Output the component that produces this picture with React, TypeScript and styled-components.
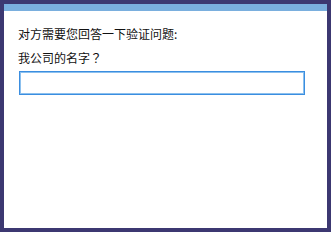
import React from "react";
import styled, { createGlobalStyle } from "styled-components";

const Global = createGlobalStyle`
    html, body {
        margin: 0;
        padding: 0;
        background: #ffffff;
    }
`;

const Frame = styled.div`
    box-sizing: border-box;
    width: 331px;
    height: 232px;
    border: 4px solid #3c3871;
    background: #ffffff;
    display: flex;
    flex-direction: column;
    font-family: "Noto Sans CJK SC", "Noto Sans", sans-serif;
    font-size: 12px;
    color: #111111;
`;

const TitleBar = styled.div`
    height: 7px;
    background: #7aafde;
    flex-shrink: 0;
`;

const Body = styled.div`
    padding: 14px 21px 0 14px;
    display: flex;
    flex-direction: column;
`;

const Line = styled.div<{ $gap?: number }>`
    line-height: 18px;
    margin-bottom: ${(p) => p.$gap ?? 0}px;
`;

// centred full-width punctuation, as in the reference
const Punct = styled.span`
    font-family: "Noto Sans CJK TC", "Noto Sans CJK SC", sans-serif;
`;

const Answer = styled.input`
    box-sizing: border-box;
    margin-left: 1px;
    width: 286px;
    height: 24px;
    border: 1px solid #3b8ee0;
    box-shadow: inset 0 0 0 1px #8cc0ee;
    outline: none;
    padding: 0 4px;
    font-family: inherit;
    font-size: 12px;
`;

export default function App() {
    return (
        <>
            <Global />
            <Frame>
                <TitleBar />
                <Body>
                    <Line $gap={6}>对方需要您回答一下验证问题:</Line>
                    <Line $gap={4}>
                        我公司的名字<Punct>？</Punct>
                    </Line>
                    <Answer type="text" />
                </Body>
            </Frame>
        </>
    );
}
